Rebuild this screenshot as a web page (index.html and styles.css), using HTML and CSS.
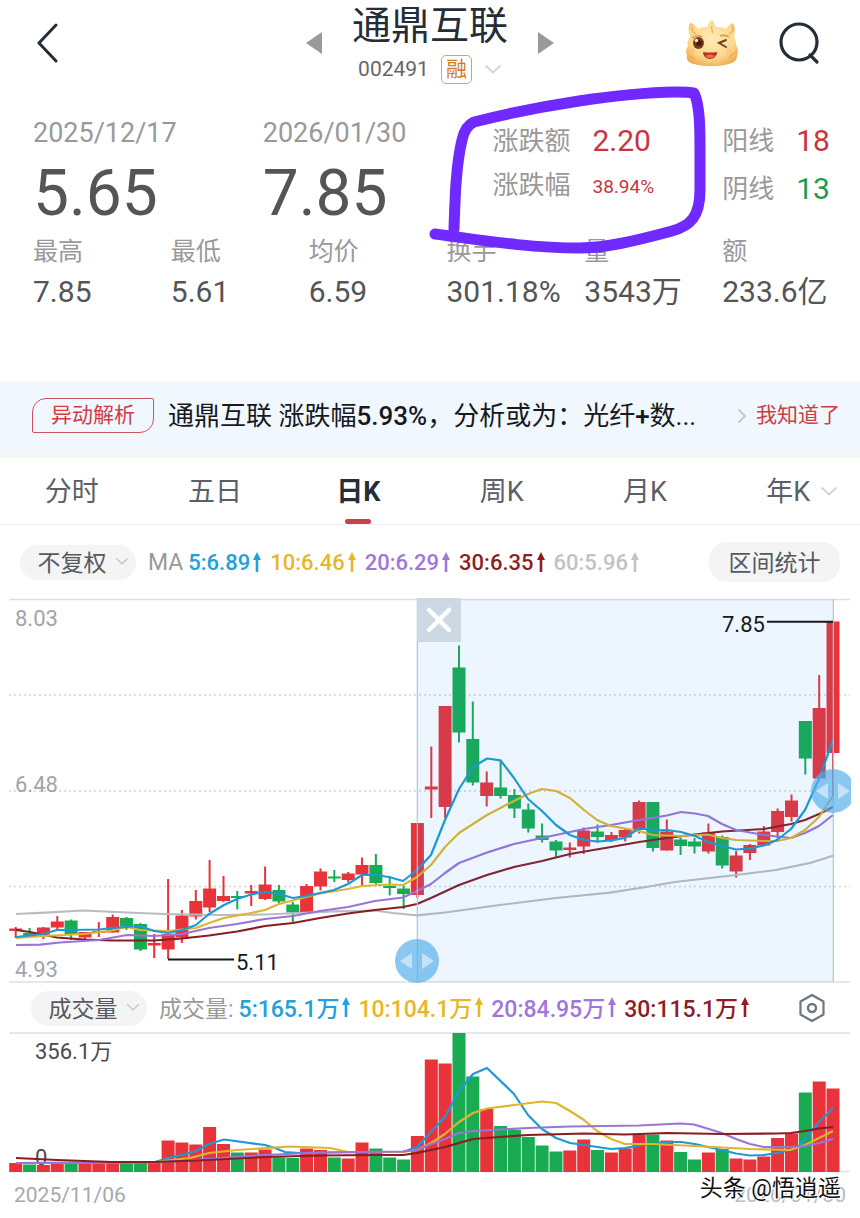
FILE: index.html
```html
<!DOCTYPE html>
<html lang="zh-CN">
<head>
<meta charset="utf-8">
<meta name="viewport" content="width=device-width, initial-scale=1">
<title>通鼎互联 002491</title>
<link rel="stylesheet" href="styles.css">
</head>
<body>
<svg class="defs" aria-hidden="true">
  <symbol id="up" viewBox="0 0 8 20"><path d="M4 0 8 8H5.3V20H2.7V8H0Z" fill="currentColor"/></symbol>
  <symbol id="down" viewBox="0 0 18 10"><path d="M1.500 1.500 9 8.500 16.500 1.500" fill="none" stroke="currentColor" stroke-width="1.800"/></symbol>
</svg>

<header class="top">
  <button class="back" aria-label="返回"><svg width="24" height="40" viewBox="0 0 24 40"><path d="M19 2 2 20 19 38" fill="none" stroke="#252d36" stroke-width="3" stroke-linecap="round" stroke-linejoin="round"/></svg></button>
  <div class="stock">
    <button aria-label="上一只"><svg width="16" height="22" viewBox="0 0 16 22"><path d="M0 11 16 0V22Z" fill="#999"/></svg></button>
    <div class="name">
      <h1>通鼎互联</h1>
      <div class="code"><span>002491</span><span class="margin">融</span><svg class="chev" width="18" height="10"><use href="#down"/></svg></div>
    </div>
    <button aria-label="下一只"><svg width="16" height="22" viewBox="0 0 16 22"><path d="M16 11 0 0V22Z" fill="#999"/></svg></button>
  </div>
  <div class="tools">
    <button aria-label="助手">
      <svg width="54" height="50" viewBox="0 0 54 50">
        <defs><radialGradient id="face" cx=".5" cy=".4" r=".65"><stop offset="0" stop-color="#ffebb5"/><stop offset=".65" stop-color="#fbd98c"/><stop offset="1" stop-color="#efa94f"/></radialGradient></defs>
        <path d="M5 19C3 12 3 6 6 5c4 1 5 4 7 6 3-2 6-2 9-2 1-3 2-5 5-7 2 2 3 4 4 7 4 0 7 0 10 2 2-3 4-5 7-6 3 4 2 9 1 13 1 4 2 6 2 9 3 4 2 7 1 11 0 5-4 7-8 8-11 3-24 3-35 0-5-1-8-4-7-9-2-3-1-6 1-9C2 24 3 22 5 19Z" fill="url(#face)"/>
        <path d="M27 8c-2 3 2 4 0 7M7 9c0 4 1 5 4 7M48 9c0 4-1 5-4 7M3 37c3 2 5 2 8 5M52 33c-3 3-5 2-8 7" fill="none" stroke="#edb35c" stroke-width="1.500"/>
        <path d="M7 20q5-4 10-1M35 18q5-2 9 1" fill="none" stroke="#e5a050" stroke-width="2"/>
        <ellipse cx="13.500" cy="25" rx="5.500" ry="6" fill="#773b1b"/><circle cx="14" cy="25" r="3" fill="#412013"/><circle cx="11.500" cy="22.500" r="1.700" fill="#fff0ce"/>
        <path d="m41 22-7 3 7 4" fill="none" stroke="#704221" stroke-width="2" stroke-linecap="round"/>
        <path d="M18 34q7 1 14 0c0 4-3 7-7 7s-7-3-7-7Z" fill="#bd2f22"/><path d="M20 38q5-3 10 0-5 4-10 0Z" fill="#ef6d55"/>
        <circle cx="7" cy="33" r="3" fill="#ffbd77" opacity=".6"/><circle cx="44" cy="33" r="3" fill="#ffbd77" opacity=".6"/>
      </svg>
    </button>
    <button aria-label="搜索"><svg width="42" height="44" viewBox="0 0 42 44"><circle cx="20" cy="21" r="18" fill="none" stroke="#252d36" stroke-width="3.200"/><path d="m31 34 7 7" stroke="#252d36" stroke-width="3.200" stroke-linecap="round"/></svg></button>
  </div>
</header>

<main>
<section class="stats">
  <div class="summary">
    <div><div class="date">2025/12/17</div><div class="price">5.65</div></div>
    <div><div class="date">2026/01/30</div><div class="price">7.85</div></div>
    <dl class="change">
      <dt>涨跌额</dt><dd class="red">2.20</dd>
      <dt>涨跌幅</dt><dd class="red small">38.94%</dd>
    </dl>
    <dl class="lines">
      <dt>阳线</dt><dd class="red">18</dd>
      <dt>阴线</dt><dd class="green">13</dd>
    </dl>
  </div>
  <dl class="figures">
    <div><dt>最高</dt><dd>7.85</dd></div>
    <div><dt>最低</dt><dd>5.61</dd></div>
    <div><dt>均价</dt><dd>6.59</dd></div>
    <div><dt>换手</dt><dd>301.18%</dd></div>
    <div><dt>量</dt><dd>3543万</dd></div>
    <div><dt>额</dt><dd>233.6亿</dd></div>
  </dl>
  <svg class="scribble" width="300" height="180" viewBox="420 80 300 180" aria-hidden="true"><path d="M454 229C455 198 456 165 462 140Q465 126 474 122C541 105 620 93 675 92Q690 92 694 93C700 105 700 130 700 150L700 190C700 217 690 226 672 231C635 241 605 248 580 248C525 248 475 239 435 234" fill="none" stroke="#7029ff" stroke-width="11" stroke-linecap="round" stroke-linejoin="round"/></svg>
</section>

<section class="alert">
  <span class="tag">异动解析</span>
  <a class="news" href="#news">通鼎互联 涨跌幅<b>5.93%</b>，分析或为：光纤<b>+</b>数...</a>
  <svg class="next" width="10" height="16" viewBox="0 0 10 16"><path d="m1.500 1.500 6.500 6.500-6.500 6.500" fill="none" stroke="#c4c9d0" stroke-width="2"/></svg>
  <button class="ack">我知道了</button>
</section>

<nav class="tabs">
  <button>分时</button><button>五日</button><button class="on">日K</button><button>周K</button><button>月K</button>
  <button>年K<svg class="chev" width="18" height="10"><use href="#down"/></svg></button>
</nav>

<div class="bar ma">
  <button class="pill">不复权<svg class="chev" width="14" height="8"><use href="#down"/></svg></button>
  <span class="key">MA</span>
  <ul class="values">
    <li class="c5">5:6.89<svg><use href="#up"/></svg></li>
    <li class="c10">10:6.46<svg><use href="#up"/></svg></li>
    <li class="c20">20:6.29<svg><use href="#up"/></svg></li>
    <li class="c30">30:6.35<svg><use href="#up"/></svg></li>
    <li class="c60">60:5.96<svg><use href="#up"/></svg></li>
  </ul>
  <button class="pill range">区间统计</button>
</div>

<svg class="chart" viewBox="0 596 860 388" role="img" aria-label="日K线图">
  <path class="rule" d="M9 599.500H850M9 982H850"/>
  <path class="dots" d="M9 695H850M9 791H850M9 886.500H850"/>
  <g class="axis"><text x="15" y="626">8.03</text><text x="15" y="792">6.48</text><text x="15" y="977">4.93</text></g>
  <g id="candles"></g>
  <g id="averages"></g>
  <rect class="selected" x="417.300" y="599" width="416" height="383"/>
  <path class="edge" d="M417.300 599V982M833.300 599V982"/>
  <path class="leader" d="M168 959.500H234M767 621.700H833"/>
  <g class="mark"><text x="236" y="970">5.11</text><text x="722" y="632">7.85</text></g>
  <rect x="417" y="598" width="44" height="44" fill="#ccd8e4"/>
  <path d="m429 610 20 20m0-20-20 20" stroke="#fff" stroke-width="4.500" stroke-linecap="round"/>
  <g><circle cx="417" cy="961" r="22" class="grip"/><path class="arrows" d="m400 961 12-8v16ZM434 961l-12-8v16Z"/></g>
  <clipPath id="inside"><path d="M800 760H851V820H800Z"/></clipPath>
  <g clip-path="url(#inside)"><circle cx="833" cy="791" r="22" class="grip"/><path class="arrows" d="m816 791 12-8v16ZM850 791l-12-8v16Z"/></g>
</svg>

<div class="bar vol">
  <button class="pill">成交量<svg class="chev" width="14" height="8"><use href="#down"/></svg></button>
  <span class="key">成交量:</span>
  <ul class="values">
    <li class="c5">5:165.1万<svg><use href="#up"/></svg></li>
    <li class="c10">10:104.1万<svg><use href="#up"/></svg></li>
    <li class="c20">20:84.95万<svg><use href="#up"/></svg></li>
    <li class="c30">30:115.1万<svg><use href="#up"/></svg></li>
  </ul>
  <button class="gear" aria-label="设置"><svg width="28" height="30" viewBox="0 0 28 30"><path d="M14 2 25.500 8.500V21.500L14 28 2.500 21.500V8.500Z" fill="none" stroke="#70767d" stroke-width="2.200" stroke-linejoin="round"/><circle cx="14" cy="15" r="4" fill="none" stroke="#70767d" stroke-width="2.500"/></svg></button>
</div>

<svg class="chart" viewBox="0 1030 860 144" role="img" aria-label="成交量图">
  <path class="rule" d="M9 1032H850M9 1170.500H850"/>
  <g id="volumes"></g>
  <g class="scale"><text x="35" y="1058">356.1万</text><text x="35" y="1164">0</text></g>
  <g id="volumeAverages"></g>
</svg>

<footer class="dates">
  <span>2025/11/06</span><span class="end">2026/01/30<span class="sign">头条 @悟逍遥</span></span>
</footer>
</main>
<script src="chart.js"></script>
</body>
</html>
```
FILE: styles.css
```css
* { box-sizing: border-box; }
body {
  margin: 0;
  background: #fff;
  color: #555;
  font-family: Roboto, "Noto Sans CJK SC", sans-serif;
  font-size: 22px;
}
button {
  border: 0;
  padding: 0;
  background: none;
  color: inherit;
  font: inherit;
  white-space: nowrap;
}
svg { display: block; flex: none; }
h1, dl, dd, ul { margin: 0; padding: 0; }
.defs { position: absolute; width: 0; height: 0; }
.chev { color: #d0d3d7; }
.red { color: #c9353f; }
.green { color: #1c9c50; }

.top {
  display: grid;
  grid-template-columns: 1fr auto 1fr;
  align-items: center;
  padding: 0 37px;
  height: 86px;
}
.back { justify-self: start; }
.stock { display: flex; align-items: center; gap: 30px; }
.name { display: flex; flex-direction: column; align-items: center; }
h1 { color: #252d36; font-size: 39px; font-weight: 400; line-height: 52px; }
.code { display: flex; align-items: center; height: 34px; gap: 12px; font-size: 21px; color: #666; }
.margin {
  width: 31px;
  height: 29px;
  border: 1px solid #d7a35c;
  border-radius: 5px;
  color: #cc7d25;
  font-size: 21px;
  line-height: 26px;
  text-align: center;
}
.tools { display: flex; align-items: center; justify-content: flex-end; gap: 40px; margin-right: 2px; }

.stats { position: relative; padding: 27px 0 67px 33px; }
.summary { display: grid; grid-template-columns: 5fr 5fr 5fr 3fr; }
.date { color: #999; font-size: 27px; line-height: 40px; }
.price { font-size: 64px; line-height: 82px; }
.change, .lines {
  display: grid;
  grid-template-columns: auto 1fr;
  align-content: start;
  column-gap: 22px;
  color: #999;
  font-size: 26px;
  line-height: 44px;
}
.change { padding-top: 6px; }
.lines { padding-top: 4px; line-height: 48px; }
.change dd, .lines dd { font-size: 30px; }
.change .small { font-size: 19px; padding-top: 2px; }
.figures { display: grid; grid-template-columns: repeat(6, 1fr); }
.figures dt { color: #999; font-size: 25px; line-height: 34px; }
.figures dd { font-size: 30px; line-height: 45px; white-space: nowrap; }
.scribble { position: absolute; left: 420px; top: -6px; }

.alert {
  display: flex;
  align-items: center;
  height: 77px;
  padding: 0 20px 0 32px;
  border-bottom: 8px solid #f4f5f5;
  background: #f0f7ff;
}
.tag {
  flex: none;
  width: 122px;
  border: 1px solid #cc5260;
  border-radius: 14px 2px;
  color: #cf3c44;
  font-size: 21px;
  line-height: 33px;
  text-align: center;
}
.news {
  flex: 1;
  min-width: 0;
  margin-left: 14px;
  overflow: hidden;
  color: #17191c;
  font-size: 26px;
  line-height: 40px;
  text-decoration: none;
  white-space: nowrap;
}
.news b { font-weight: 500; }
.next { margin: 0 9px 0 12px; }
.ack { color: #cf3c44; font-size: 21px; line-height: 30px; padding-bottom: 2px; }

.tabs {
  display: grid;
  grid-template-columns: repeat(6, 1fr);
  border-bottom: 1px solid #eee;
}
.tabs button { position: relative; height: 66px; padding-bottom: 3px; color: #5b6067; font-size: 27px; }
.tabs .on { color: #252d36; font-weight: 700; }
.tabs .on::after {
  content: "";
  position: absolute;
  left: 50%;
  bottom: 0;
  width: 26px;
  height: 5px;
  margin-left: -13px;
  border-radius: 3px;
  background: #cb4148;
}
.tabs .chev { position: absolute; right: 22px; top: 28px; }

.bar { display: flex; align-items: center; }
.ma { padding: 17px 20px 14px; }
.vol { padding: 6px 34px 5px 31px; }
.pill {
  display: flex;
  align-items: center;
  justify-content: center;
  flex: none;
  gap: 8px;
  width: 116px;
  height: 35px;
  padding: 0 0 2px 10px;
  border-radius: 18px;
  background: #f4f4f5;
  color: #555a61;
  font-size: 23px;
}
.pill .chev { color: #c3c6ca; }
.range { width: 131px; height: 40px; margin-left: auto; padding-left: 0; }
.key { margin: 0 5px 0 12px; color: #999; font-size: 23px; white-space: nowrap; }
.values { display: flex; gap: 9px; list-style: none; font-weight: 500; white-space: nowrap; }
.values li { display: flex; align-items: center; gap: 3px; }
.values svg { width: 8px; height: 20px; }
.vol .values { font-size: 23px; gap: 8px; }
.vol .key, .vol .values { padding-bottom: 2px; }
.c5 { color: #22a0dc; }
.c10 { color: #e8b629; }
.c20 { color: #9f76da; }
.c30 { color: #8f1d25; }
.c60 { color: #c2c2c4; }
.gear { margin-left: auto; }

.chart { width: 100%; height: auto; }
.rule { stroke: #dde0e3; stroke-width: 1.5; }
.dots { stroke: #d0d4d8; stroke-width: 1.3; stroke-dasharray: 2 3; }
.axis text { fill: #a0a5ab; }
.mark text { fill: #17191f; }
.scale text { fill: #4a4a4d; }
.leader { stroke: #17191f; stroke-width: 2; }
.selected { fill: #1e8cf5; opacity: .08; }
.edge { stroke: #a9cbd2; stroke-width: 1.2; }
.grip { fill: #54aeeb; opacity: .68; }
.arrows { fill: #c5e2fa; }
.up { fill: #e8333b; }
.dn { fill: #19ab52; }
.avg { fill: none; stroke: currentColor; stroke-width: 2.2; stroke-linejoin: round; }
.m5 { color: #1e99d5; }
.m10 { color: #e0b42c; }
.m20 { color: #9a74d8; }
.m30 { color: #8a1c24; }
.m60 { color: #babcc0; }

.dates {
  display: flex;
  justify-content: space-between;
  padding: 0 14px;
  height: 44px;
  color: #a5a9af;
  font-size: 21px;
  line-height: 40px;
}
.end { position: relative; color: #bcbcc0; }
.sign {
  position: absolute;
  right: 5px;
  top: -6px;
  color: #111;
  font-size: 23px;
  white-space: nowrap;
  text-shadow: -1px -1px 0 #fff, 1px 1px 0 #fff, -2px -1px 1px #fff;
}
```
FILE: chart.js
```js
const STEP = 13.853, START = 15.7;
const cx = i => START + STEP * i;

// direction, high, body top, body bottom, low, volume bar top
const days = [
  ["u",927,928.5,931,938,1162],["d",928,933,936,937,1163.5],["u",927,927.5,934.5,939,1164],["u",916,921.5,927.5,930,1163],
  ["d",919.5,920.5,934.5,940,1163],["u",932,932,937.5,940,1162],["u",922,931,933,937,1163],["u",914.5,917,932.5,932.5,1160],
  ["d",917,918,926.5,930,1162],["d",923,924,949.5,951,1162],["u",934,943,945.5,958,1162],["u",879,934,949.5,959,1139.5],
  ["u",910,915.5,937.5,943,1141.5],["u",890,901,916.5,919.5,1143.5],["u",860,888.5,907.5,912,1126],["u",876,896,901,902,1143],
  ["d",891,896,898,909.5,1151.5],["u",885,891,893.5,906,1151.5],["u",866.5,884.5,899,900,1148.5],["d",885,890,901.5,903,1156.5],
  ["d",902,904.5,912.5,922,1157],["u",884,886,912.5,912.5,1147.5],["u",868.5,871.5,886.5,890.5,1149],["d",870,876.5,878.5,882,1156.5],
  ["u",872,873.5,880,882.5,1157.5],["u",857.5,865,874.5,886,1141.5],["d",854,865,883,884,1147.5],["d",876.5,886,888,895.5,1156.5],
  ["d",885.5,888.5,894,909,1158.5],["u",823,823,895,898,1135],["u",746.5,786.5,789.5,818,1058.5],["u",706,706,807,818,1062.5],
  ["d",645.5,667.5,732.5,742.5,1032],["d",701.5,739,782.5,785.5,1075.5],["u",771.5,782.5,796,806.5,1108],["d",760.5,787.5,796,798.5,1125],
  ["d",789,795,808.5,818,1129],["d",803.5,809.5,828.5,832.5,1136],["d",823.5,835.5,840,842.5,1144.5],["d",840,841.5,850.5,857.5,1150.5],
  ["u",842.5,847.5,850,857.5,1149.5],["u",827.5,830.5,846.5,854,1138.5],["d",824.5,831.5,837,842.5,1149],["u",832,835,840,842,1151.5],
  ["u",828.5,830,837.5,841.5,1147.5],["u",800.5,802,830,833.5,1133.5],["d",802,802,848,851.5,1133.5],["u",819.5,831.5,850.5,850.5,1139.5],
  ["d",837.5,839.5,846,855,1151],["d",838,841.5,846.5,853.5,1158.5],["u",823.5,832.5,851.5,853.5,1151.5],["d",835.5,837,865.5,868.5,1148],
  ["u",851,855.5,871.5,877.5,1157.5],["u",844,845,853,860,1158.5],["u",826,831.5,845.5,845.5,1155.5],["u",808.5,811,832,838.5,1137],
  ["u",794.5,800.5,817,821.5,1132.5],["d",721,721,758.5,774.5,1091.5],["u",675,708,778.5,778.5,1080.5],["u",621.5,621.5,753,797,1087.5]
];

const price = {
  m60: "16,914 50,912.3 83,910.5 127,912.5 165,914 220,915 266,914.5 300,913 334,911.3 375,910.5 393,913 417,915.3 445,912.500 500,905 556,898 610,892.7 643,887.5 675,882 710,878 736,875 776,870 810,863 833,855.7",
  m30: "16,930 30,932 57,937.5 84,939.5 112,940.5 154,940.5 182,938.5 209,935.5 237,931.5 265,926 293,923 320,918 348,913.5 375,910 403,907 417,904 431,898 459,885 487,875 514,867 542,861 570,854 611,847 639,842 667,838 695,834.5 722,831.5 764,829 791,824 805,820 819,814 833,807",
  m20: "16,945 40,944.7 60,942.5 99,940 127,935 154,936 182,934 209,928 237,924 265,919 293,916 320,911 348,907 375,901 403,897.5 417,891 431,884 445,873 459,863 487,852.5 514,844 542,838 570,832 584,829 611,825 639,820 667,815.5 681,812 695,813.5 708,816 722,824 736,830 764,835 791,838 805,833 819,826 833,815",
  m10: "16,938 43,936 84,934 112,930.5 127,927 140,930 168,931 196,928 209,923 224,918 251,913 265,910 279,904 306,897 320,893.5 348,889 362,886 390,884.5 403,885 417,877 431,865 445,847 459,833 487,815 514,801 528,794 542,789 556,791 570,798 584,810 597,820 611,826 639,831 653,835 681,836 708,834.5 722,838 736,840 764,841 777,841 791,838 805,830 819,817 833,796",
  m5: "16,937 43,934 57,930 71,930 99,929.5 112,928 140,926 154,931 168,933 182,930 196,925 209,914 224,905 237,899 251,894.5 265,892 279,894 293,898 306,896 334,890 348,884 362,875 375,875 389,877 403,881 417,870 431,855 445,820 459,789 473,767 487,758.5 500.5,760.3 514,778 528,799 542,811 556,825 570,835 584,840 597,841.5 611,840.5 625,838 639,828 653,830.5 667,830 681,832 695,836 708,842 722,846 736,849.5 750,848.5 764,845.5 777,840 791,829 805,810 819,779 833,740"
};

const volume = {
  m5: "16,1162 85,1162 155,1161 168,1157 182,1154 196,1150 209,1143 224,1138.5 265,1144 275,1147 285,1151 300,1152 362,1151 403,1151 417,1146 431,1131 445,1116 459,1090 473,1073 487,1067 514,1093 528,1114 542,1128 556,1137 570,1142 584,1144 611,1148 625,1147 639,1144.5 653,1143 667,1141 681,1141 695,1143 708,1146 722,1149 736,1152.5 750,1154.5 764,1154 777,1152 791,1149 798,1146 805,1138 819,1121 833,1107",
  m10: "16,1162 155,1161 190,1157 209,1152 237,1149 290,1145.5 330,1147 348,1151 403,1151 417,1149 431,1142 445,1133 459,1121 473,1112 487,1107.5 514,1104 542,1100.5 556,1102 570,1110 584,1119 597,1130 611,1138 625,1143 653,1143 695,1145 750,1148 790,1149 805,1144 819,1137 833,1130",
  m20: "16,1162 155,1161.5 209,1158 265,1154 320,1151.5 403,1150.5 417,1149 431,1143 445,1138 459,1132 473,1130 528,1127 570,1125.5 639,1124.5 681,1122.5 694,1123.5 722,1132 736,1138 750,1143 764,1146 791,1146 805,1145 819,1142 833,1138",
  m30: "16,1157 57,1159 112,1161 155,1161 209,1159 265,1156 320,1154.5 375,1154 403,1154 417,1152 445,1146 459,1142 473,1138 500,1136 528,1134 584,1132.5 625,1133.5 667,1132 722,1133 777,1132.5 791,1132 805,1130 819,1127.5 833,1126"
};

const rect = (cls, x, y, w, h) => `<rect class="${cls}" x="${x.toFixed(1)}" y="${y}" width="${w}" height="${h}"/>`;
const curves = set => Object.entries(set).map(([k, p]) => `<polyline class="avg ${k}" points="${p}"/>`).join("");

document.getElementById("candles").innerHTML = days.map(([d, hi, top, bottom, lo], i) => {
  const cls = d === "u" ? "up" : "dn";
  return rect(cls, cx(i) - 1, hi, 2, lo - hi) + rect(cls, cx(i) - 6.5, top, 13, bottom - top);
}).join("");
document.getElementById("volumes").innerHTML = days.map(([d, , , , , y], i) =>
  rect(d === "u" ? "up" : "dn", cx(i) - 6.5, y, 13, 1171 - y)).join("");
document.getElementById("averages").innerHTML = curves(price);
document.getElementById("volumeAverages").innerHTML = curves(volume);
```
